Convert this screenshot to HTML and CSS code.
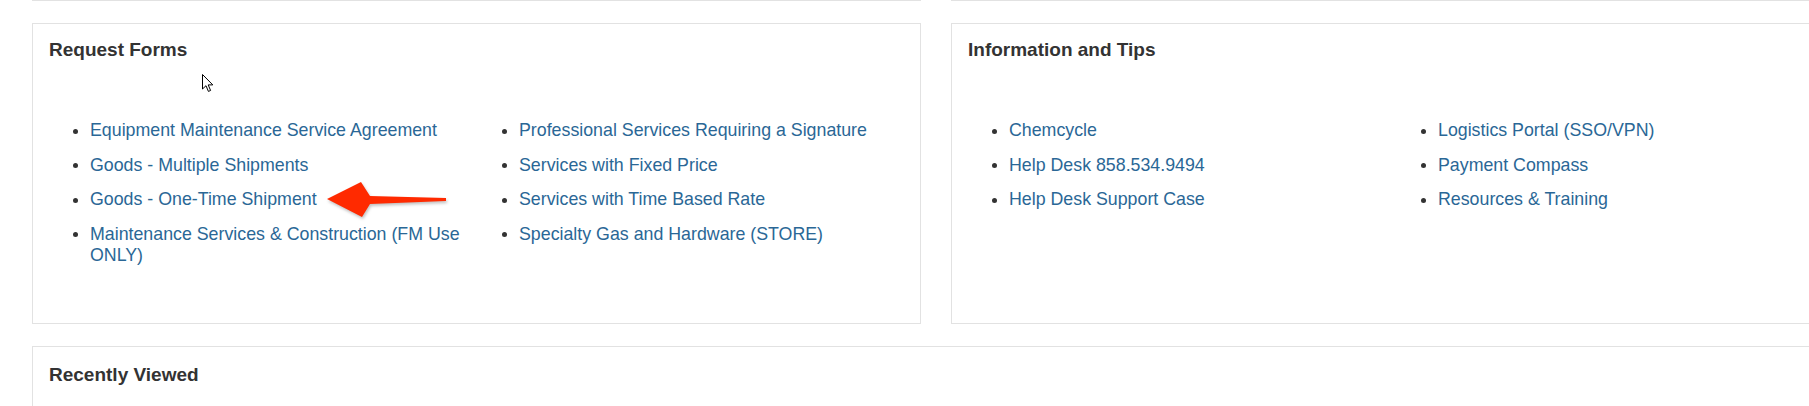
FILE: index.html
```html
<!DOCTYPE html>
<html lang="en">
<head>
<meta charset="utf-8">
<title>Request Forms</title>
<link rel="stylesheet" href="styles.css">
</head>
<body>
<div class="page">
  <div class="prev-row">
    <div class="prev-card"></div>
    <div class="prev-card"></div>
  </div>

  <div class="card-row">
    <section class="card">
      <h2 class="card-title">Request Forms</h2>
      <div class="lists">
        <ul class="link-list">
          <li><a href="#">Equipment Maintenance Service Agreement</a></li>
          <li><a href="#">Goods - Multiple Shipments</a></li>
          <li><a href="#">Goods - One-Time Shipment</a></li>
          <li><a href="#">Maintenance Services &amp; Construction (FM Use ONLY)</a></li>
        </ul>
        <ul class="link-list">
          <li><a href="#">Professional Services Requiring a Signature</a></li>
          <li><a href="#">Services with Fixed Price</a></li>
          <li><a href="#">Services with Time Based Rate</a></li>
          <li><a href="#">Specialty Gas and Hardware (STORE)</a></li>
        </ul>
      </div>
    </section>

    <section class="card">
      <h2 class="card-title">Information and Tips</h2>
      <div class="lists">
        <ul class="link-list">
          <li><a href="#">Chemcycle</a></li>
          <li><a href="#">Help Desk 858.534.9494</a></li>
          <li><a href="#">Help Desk Support Case</a></li>
        </ul>
        <ul class="link-list">
          <li><a href="#">Logistics Portal (SSO/VPN)</a></li>
          <li><a href="#">Payment Compass</a></li>
          <li><a href="#">Resources &amp; Training</a></li>
        </ul>
      </div>
    </section>
  </div>

  <section class="card card-wide">
    <h2 class="card-title">Recently Viewed</h2>
  </section>
</div>

<svg class="annot-arrow" width="125" height="44" viewBox="0 0 125 44" aria-hidden="true">
  <path d="M2 21 L36 4 L45 18 L121 20 L121 23 L45 26 L37 39 Z" fill="#ff2a00"/>
</svg>

<svg class="cursor" width="12" height="19" viewBox="0 0 12 19" aria-hidden="true">
  <path d="M0.5 0.5 L0.5 15 L4 11.7 L6.4 17.4 L8.6 16.5 L6.2 10.9 L10.8 10.9 Z" fill="#fff" stroke="#000" stroke-width="1" stroke-linejoin="miter"/>
</svg>
</body>
</html>
```

FILE: styles.css
```css
html, body {
  margin: 0;
  padding: 0;
  background: #fff;
}

body {
  font-family: "Liberation Sans", Arial, sans-serif;
  color: #333;
  overflow: hidden;
  width: 1809px;
  height: 406px;
  position: relative;
}

.page {
  padding-left: 32px;
  width: 1900px;
}

.prev-row {
  display: grid;
  grid-template-columns: 889px 889px;
  column-gap: 30px;
}

.prev-card {
  height: 0;
  border-bottom: 1px solid #e2e2e2;
}

.card-row {
  display: grid;
  grid-template-columns: 889px 889px;
  column-gap: 30px;
  margin-top: 22px;
}

.card {
  box-sizing: border-box;
  border: 1px solid #e2e2e2;
  background: #fff;
  padding: 15px 17px 0 16px;
  min-height: 301px;
}

.card-wide {
  margin-top: 22px;
  width: 1809px;
  min-height: 120px;
  padding-top: 17px;
}

.card-title {
  margin: 0;
  font-size: 19px;
  line-height: 22px;
  font-weight: bold;
  color: #333;
}

.lists {
  display: grid;
  grid-template-columns: 429px 1fr;
  margin-top: 59px;
}

.link-list {
  list-style: none;
  margin: 0;
  padding: 0 0 0 41px;
  display: flex;
  flex-direction: column;
  row-gap: 13.6px;
}

.link-list li {
  display: flex;
  align-items: flex-start;
  font-size: 17.8px;
  line-height: 21px;
  margin-left: -17px;
}

.link-list li::before {
  content: "";
  flex: 0 0 5px;
  width: 5px;
  height: 5px;
  border-radius: 50%;
  background: #333;
  margin-top: 8.5px;
  margin-right: 12px;
}

.link-list a {
  color: #2a6796;
  text-decoration: none;
}

.annot-arrow {
  position: absolute;
  left: 325px;
  top: 178px;
  filter: drop-shadow(1px 2px 1.5px rgba(0, 0, 0, 0.25));
}

.cursor {
  position: absolute;
  left: 202px;
  top: 74px;
}
```
